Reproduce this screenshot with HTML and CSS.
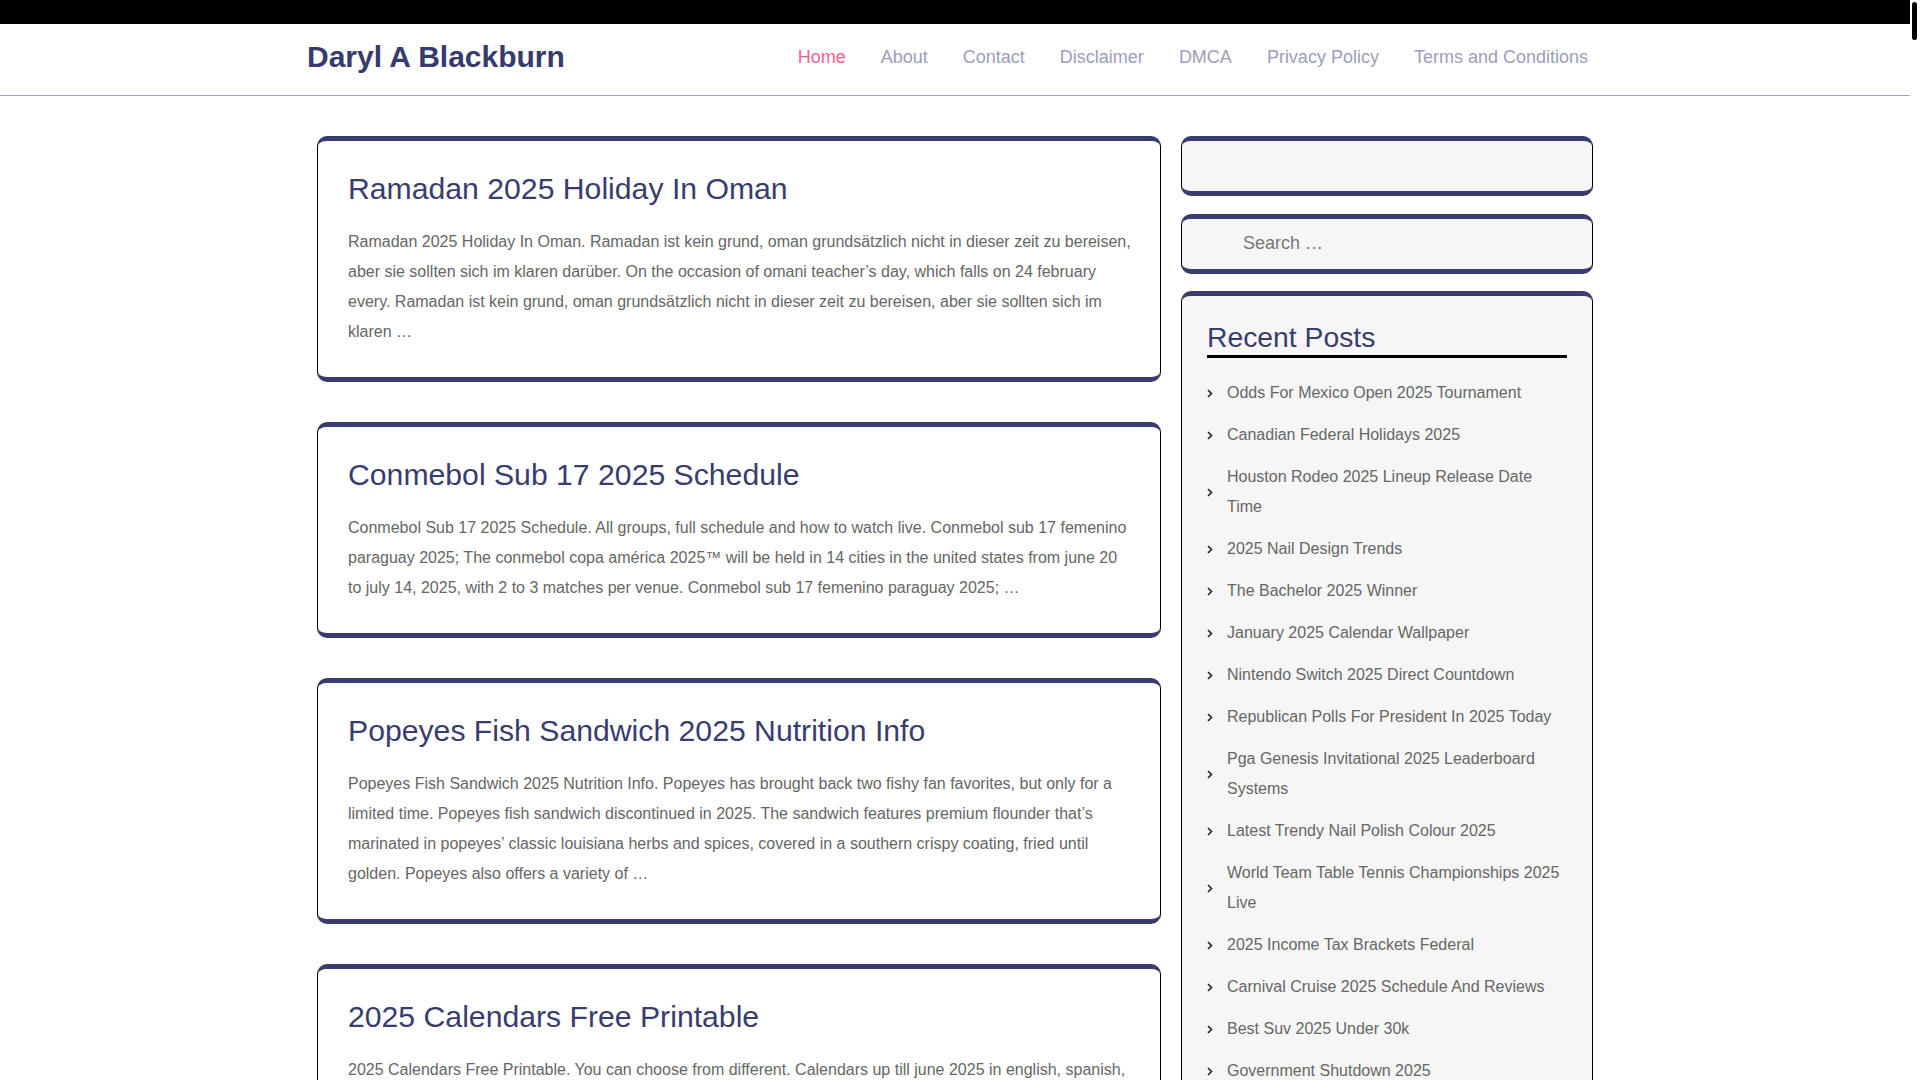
FILE: index.html
```html
<!DOCTYPE html>
<html lang="en">
<head>
<meta charset="utf-8">
<title>Daryl A Blackburn</title>
<link rel="stylesheet" href="styles.css">
</head>
<body>
<div class="page">
  <div class="topbar"></div>
  <header class="site-header">
    <div class="header-inner">
      <a class="site-title" href="#">Daryl A Blackburn</a>
      <nav class="main-nav">
        <ul class="menu">
          <li><a class="current" href="#">Home</a></li>
          <li><a href="#">About</a></li>
          <li><a href="#">Contact</a></li>
          <li><a href="#">Disclaimer</a></li>
          <li><a href="#">DMCA</a></li>
          <li><a href="#">Privacy Policy</a></li>
          <li><a href="#">Terms and Conditions</a></li>
        </ul>
      </nav>
    </div>
  </header>

  <div class="container">
    <main class="posts">
      <article class="card">
        <h2 class="card-title">Ramadan 2025 Holiday In Oman</h2>
        <p class="card-text">Ramadan 2025 Holiday In Oman. Ramadan ist kein grund, oman grundsätzlich nicht in dieser zeit zu bereisen, aber sie sollten sich im klaren darüber. On the occasion of omani teacher’s day, which falls on 24 february every. Ramadan ist kein grund, oman grundsätzlich nicht in dieser zeit zu bereisen, aber sie sollten sich im klaren …</p>
      </article>
      <article class="card">
        <h2 class="card-title">Conmebol Sub 17 2025 Schedule</h2>
        <p class="card-text">Conmebol Sub 17 2025 Schedule. All groups, full schedule and how to watch live. Conmebol sub 17 femenino paraguay 2025; The conmebol copa américa 2025™ will be held in 14 cities in the united states from june 20 to july 14, 2025, with 2 to 3 matches per venue. Conmebol sub 17 femenino paraguay 2025; …</p>
      </article>
      <article class="card">
        <h2 class="card-title">Popeyes Fish Sandwich 2025 Nutrition Info</h2>
        <p class="card-text">Popeyes Fish Sandwich 2025 Nutrition Info. Popeyes has brought back two fishy fan favorites, but only for a limited time. Popeyes fish sandwich discontinued in 2025. The sandwich features premium flounder that’s marinated in popeyes’ classic louisiana herbs and spices, covered in a southern crispy coating, fried until golden. Popeyes also offers a variety of …</p>
      </article>
      <article class="card">
        <h2 class="card-title">2025 Calendars Free Printable</h2>
        <p class="card-text">2025 Calendars Free Printable. You can choose from different. Calendars up till june 2025 in english, spanish, …</p>
      </article>
    </main>

    <aside class="sidebar">
      <section class="widget widget-empty"></section>
      <section class="widget widget-search">
        <input class="search-field" type="search" placeholder="Search …">
      </section>
      <section class="widget widget-posts">
        <h2 class="widget-title">Recent Posts</h2>
        <ul class="post-list">
          <li><svg class="chev" width="6" height="9" viewBox="0 0 6 9"><path d="M1 1l3.5 3.5L1 8"/></svg><a href="#">Odds For Mexico Open 2025 Tournament</a></li>
          <li><svg class="chev" width="6" height="9" viewBox="0 0 6 9"><path d="M1 1l3.5 3.5L1 8"/></svg><a href="#">Canadian Federal Holidays 2025</a></li>
          <li><svg class="chev" width="6" height="9" viewBox="0 0 6 9"><path d="M1 1l3.5 3.5L1 8"/></svg><a href="#">Houston Rodeo 2025 Lineup Release Date Time</a></li>
          <li><svg class="chev" width="6" height="9" viewBox="0 0 6 9"><path d="M1 1l3.5 3.5L1 8"/></svg><a href="#">2025 Nail Design Trends</a></li>
          <li><svg class="chev" width="6" height="9" viewBox="0 0 6 9"><path d="M1 1l3.5 3.5L1 8"/></svg><a href="#">The Bachelor 2025 Winner</a></li>
          <li><svg class="chev" width="6" height="9" viewBox="0 0 6 9"><path d="M1 1l3.5 3.5L1 8"/></svg><a href="#">January 2025 Calendar Wallpaper</a></li>
          <li><svg class="chev" width="6" height="9" viewBox="0 0 6 9"><path d="M1 1l3.5 3.5L1 8"/></svg><a href="#">Nintendo Switch 2025 Direct Countdown</a></li>
          <li><svg class="chev" width="6" height="9" viewBox="0 0 6 9"><path d="M1 1l3.5 3.5L1 8"/></svg><a href="#">Republican Polls For President In 2025 Today</a></li>
          <li><svg class="chev" width="6" height="9" viewBox="0 0 6 9"><path d="M1 1l3.5 3.5L1 8"/></svg><a href="#">Pga Genesis Invitational 2025 Leaderboard Systems</a></li>
          <li><svg class="chev" width="6" height="9" viewBox="0 0 6 9"><path d="M1 1l3.5 3.5L1 8"/></svg><a href="#">Latest Trendy Nail Polish Colour 2025</a></li>
          <li><svg class="chev" width="6" height="9" viewBox="0 0 6 9"><path d="M1 1l3.5 3.5L1 8"/></svg><a href="#">World Team Table Tennis Championships 2025 Live</a></li>
          <li><svg class="chev" width="6" height="9" viewBox="0 0 6 9"><path d="M1 1l3.5 3.5L1 8"/></svg><a href="#">2025 Income Tax Brackets Federal</a></li>
          <li><svg class="chev" width="6" height="9" viewBox="0 0 6 9"><path d="M1 1l3.5 3.5L1 8"/></svg><a href="#">Carnival Cruise 2025 Schedule And Reviews</a></li>
          <li><svg class="chev" width="6" height="9" viewBox="0 0 6 9"><path d="M1 1l3.5 3.5L1 8"/></svg><a href="#">Best Suv 2025 Under 30k</a></li>
          <li><svg class="chev" width="6" height="9" viewBox="0 0 6 9"><path d="M1 1l3.5 3.5L1 8"/></svg><a href="#">Government Shutdown 2025</a></li>
        </ul>
      </section>
    </aside>
  </div>
</div>
<div class="scrollbar"><div class="scroll-thumb"></div></div>
</body>
</html>
```

FILE: styles.css
```css
html {
  overflow: hidden;
}

body {
  margin: 0;
  background: #ffffff;
  font-family: "Liberation Sans", Arial, sans-serif;
}

.page {
  width: 1910px;
}

.topbar {
  height: 24px;
  background: #000000;
}

.site-header {
  border-bottom: 1px solid #a2a2ba;
}

.header-inner {
  width: 1296px;
  height: 71px;
  margin: 0 auto;
  padding-bottom: 6px;
  box-sizing: border-box;
  display: flex;
  align-items: center;
  justify-content: space-between;
}

.site-title {
  font-size: 30px;
  font-weight: 700;
  color: #373a6d;
  text-decoration: none;
}

.main-nav {
  margin-top: 1px;
}

.menu {
  display: flex;
  gap: 35px;
  list-style: none;
  margin: 0;
  padding: 0 15px 0 0;
}

.menu a {
  font-size: 18px;
  color: #9c9ebc;
  text-decoration: none;
}

.menu a.current {
  color: #f7618f;
}

.container {
  width: 1276px;
  margin: 40px auto 0;
  display: flex;
  align-items: flex-start;
  gap: 20px;
}

.posts {
  width: 844px;
  flex: none;
  display: flex;
  flex-direction: column;
  gap: 40px;
}

.card {
  background: #ffffff;
  border: 1px solid #000000;
  border-top: 5px solid #393c6e;
  border-bottom: 5px solid #393c6e;
  border-radius: 10px;
  padding: 30px 27px 30px 30px;
}

.card-title {
  margin: 0 0 20px;
  font-size: 30.2px;
  line-height: 35px;
  padding-bottom: 1px;
  font-weight: 400;
  color: #393c6e;
}

.card-text {
  margin: 0;
  font-size: 16px;
  line-height: 30px;
  color: #666666;
}

.sidebar {
  width: 412px;
  flex: none;
  display: flex;
  flex-direction: column;
  gap: 17.5px;
}

.widget {
  background: #f6f6f6;
  border: 1px solid #000000;
  border-top: 5px solid #393c6e;
  border-bottom: 5px solid #393c6e;
  border-radius: 10px;
  box-sizing: border-box;
}

.widget-empty {
  height: 60px;
}

.widget-search {
  height: 60px;
  display: flex;
  align-items: center;
  padding-left: 61px;
}

.search-field {
  border: none;
  outline: none;
  background: transparent;
  padding: 0;
  margin: 0;
  width: 300px;
  font-family: "Liberation Sans", Arial, sans-serif;
  font-size: 18px;
  color: #666666;
}

.search-field::placeholder {
  color: #777777;
}

.widget-posts {
  padding: 24px 25px 20px;
}

.widget-title {
  margin: 0;
  padding-bottom: 1px;
  border-bottom: 3px solid #000000;
  font-size: 28.3px;
  line-height: 34px;
  font-weight: 400;
  color: #393c6e;
}

.post-list {
  list-style: none;
  margin: 14px 0 0;
  padding: 0;
}

.post-list li {
  display: flex;
  align-items: center;
  padding: 6px 0;
  font-size: 16px;
  line-height: 30px;
}

.chev {
  flex: none;
  margin-right: 14px;
}

.chev path {
  fill: none;
  stroke: #222222;
  stroke-width: 1.6;
}

.post-list a {
  flex: 1;
  color: #666666;
  text-decoration: none;
}

.scrollbar {
  position: fixed;
  top: 0;
  right: 0;
  width: 10px;
  height: 100%;
  background: #ffffff;
}

.scroll-thumb {
  position: absolute;
  top: 2px;
  left: 2px;
  width: 5px;
  height: 38px;
  border-radius: 3px;
  background: #000000;
}
```
